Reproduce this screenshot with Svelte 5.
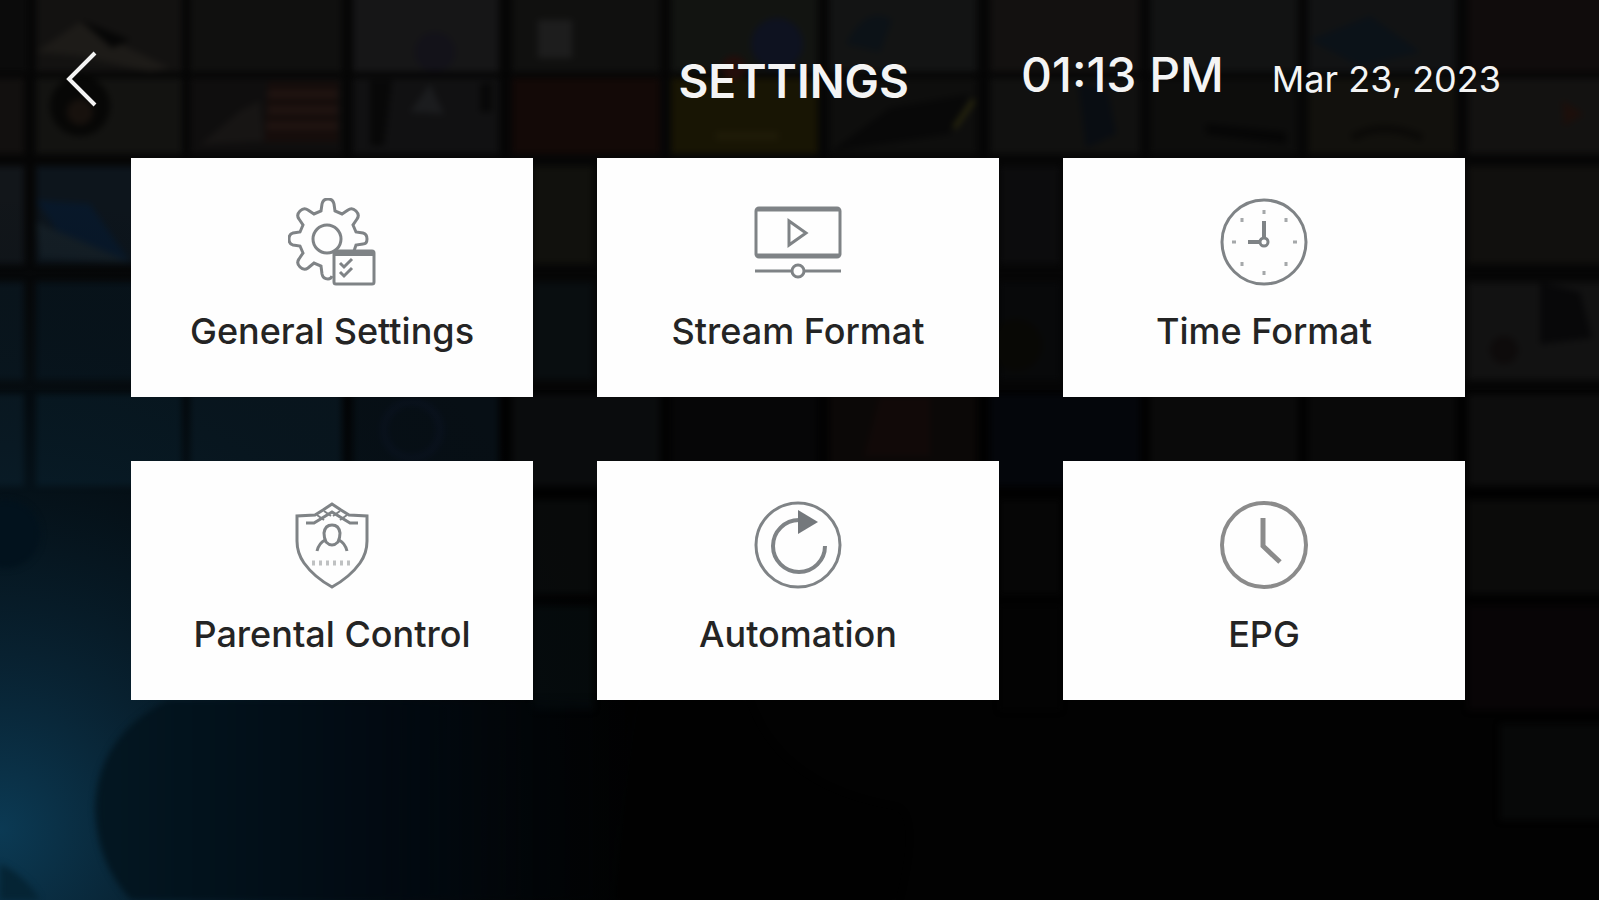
<script>
  const items = [
    { id: "general", label: "General Settings" },
    { id: "stream", label: "Stream Format" },
    { id: "time", label: "Time Format" },
    { id: "parental", label: "Parental Control" },
    { id: "automation", label: "Automation" },
    { id: "epg", label: "EPG" }
  ];

  // one list per row of screens: [x, width, color]
  const wall = [
    {
      y: -6,
      height: 78,
      screens: [
        [-10, 38, "#0b0b0b"], [36, 146, "#131211"], [190, 152, "#10100f"], [353, 146, "#161617"],
        [512, 148, "#10100f"], [671, 147, "#121411"], [829, 148, "#131414"], [990, 150, "#131110"],
        [1150, 148, "#121313"], [1308, 148, "#121314"], [1468, 140, "#100c0c"]
      ]
    },
    {
      y: 78,
      height: 76,
      screens: [
        [-10, 34, "#12100f"], [36, 146, "#131311"], [190, 152, "#0f0e0e"], [353, 146, "#111112"],
        [512, 148, "#130907"], [671, 147, "#181504"], [829, 148, "#0e0e0d"], [990, 150, "#111110"],
        [1150, 148, "#0d0d0c"], [1308, 148, "#12110d"], [1468, 140, "#131211"]
      ]
    },
    {
      y: 166,
      height: 98,
      screens: [
        [-10, 34, "#12161a"], [36, 146, "#0d151c"], [533, 60, "#11110d"], [1000, 60, "#0c0c0d"],
        [1468, 140, "#11100e"]
      ]
    },
    {
      y: 282,
      height: 98,
      screens: [
        [-10, 34, "#0a151c"], [36, 146, "#08131a"], [533, 60, "#090e10"], [1000, 60, "#08090a"],
        [1468, 140, "#121212"]
      ]
    },
    {
      y: 394,
      height: 92,
      screens: [
        [-10, 34, "#0b1820"], [36, 146, "#08171f"], [190, 152, "#09161e"], [353, 146, "#070f15"],
        [512, 148, "#0a0c0d"], [671, 147, "#060607"], [829, 148, "#0b0807"], [990, 150, "#04060b"],
        [1150, 148, "#0a0a0a"], [1308, 148, "#090909"], [1468, 140, "#0d0d0d"]
      ]
    },
    {
      y: 500,
      height: 94,
      screens: [[533, 60, "#080a0a"], [1000, 60, "#060606"], [1468, 140, "#0b0b0a"]]
    },
    {
      y: 606,
      height: 104,
      screens: [[533, 60, "#050a0b"], [1000, 60, "#030303"], [1468, 140, "#080506"]]
    },
    {
      y: 724,
      height: 96,
      screens: [[1500, 110, "#070808"]]
    }
  ];
</script>

<main class="page">
  <svg class="backdrop" viewBox="0 0 1599 900" preserveAspectRatio="xMidYMid slice" aria-hidden="true">
    <defs>
      <radialGradient id="glow" gradientUnits="userSpaceOnUse" cx="0" cy="830" r="640">
        <stop offset="0" stop-color="#0b3a54" />
        <stop offset="0.25" stop-color="#0a2b3f" stop-opacity="0.8" />
        <stop offset="0.6" stop-color="#071a26" stop-opacity="0.5" />
        <stop offset="1" stop-color="#040a10" stop-opacity="0" />
      </radialGradient>
      <linearGradient id="lens" x1="0" y1="0" x2="1" y2="0">
        <stop offset="0" stop-color="#031722" />
        <stop offset="0.5" stop-color="#020a12" />
        <stop offset="1" stop-color="#010203" stop-opacity="0" />
      </linearGradient>
      <filter id="soft" color-interpolation-filters="sRGB">
        <feGaussianBlur stdDeviation="3" />
      </filter>
    </defs>
    <rect width="1599" height="900" fill="#020202" />
    <rect width="1599" height="390" fill="#060606" />
    <g filter="url(#soft)">
      {#each wall as row}
        {#each row.screens as [x, width, color]}
          <rect {x} y={row.y} {width} height={row.height} fill={color} />
        {/each}
      {/each}
      <path d="M36 52 80 22l36 20 54 26-20 4-70-16z" fill="#1d1b18" />
      <path d="M80 20l50 20-18 8z" fill="#060606" />
      <circle cx="80" cy="106" r="30" fill="#070706" />
      <circle cx="80" cy="112" r="13" fill="#17110d" />
      <path d="M200 145l40-34 20-10 4 40z" fill="#171514" />
      <path d="M268 82h70v60h-74z" fill="#160d0b" />
      <path d="M268 94h70M268 110h70M266 126h72" stroke="#211512" stroke-width="6" />
      <path d="M370 80h22l-8 66h-14zM480 84l12-2v30h-12z" fill="#080808" />
      <path d="M410 112l20-28 14 30z" fill="#1b1c1e" />
      <path d="M538 20h34v38h-34z" fill="#1d1d1d" />
      <circle cx="435" cy="52" r="20" fill="#131219" />
      <circle cx="777" cy="44" r="26" fill="#0e1220" />
      <circle cx="734" cy="68" r="12" fill="#240d0a" />
      <path d="M716 136h62" stroke="#1f1b08" stroke-width="8" />
      <path d="M846 44q20-40 46-24l-12 32z" fill="#0c1217" />
      <path d="M830 152l60-44 80-14-20 40z" fill="#080808" />
      <path d="M954 128l20-28" stroke="#2b290d" stroke-width="4" />
      <path d="M1078 82l30 10 8 42-30 14z" fill="#090d12" />
      <path d="M1206 124l80 8v12l-80-10z" fill="#060606" />
      <path d="M1310 40l60-24 50 36-60 14z" fill="#0b1218" />
      <path d="M1352 138q30-18 70 0" stroke="#0b0a08" stroke-width="8" fill="none" />
      <path d="M1562 100l22 14-20 12z" fill="#1c0f0b" />
      <path d="M36 200l54 4 40 58-60-12z" fill="#08182a" />
      <path d="M36 222l94 40-90-4z" fill="#151f26" />
      <path d="M1540 282l40 10 12 46-52 6z" fill="#080809" />
      <circle cx="1504" cy="350" r="14" fill="#0e0b0b" />
      <path d="M880 396h50v60h-66z" fill="#110908" />
      <circle cx="412" cy="430" r="28" fill="none" stroke="#0a121f" stroke-width="6" />
      <circle cx="1016" cy="345" r="26" fill="#080805" />
    </g>
    <rect width="700" height="900" fill="url(#glow)" />
    <g filter="url(#soft)">
      <circle cx="6" cy="534" r="34" fill="#02121d" />
      <path d="M168 700Q96 736 95 810q2 54 36 90h530V700z" fill="url(#lens)" />
      <path d="M0 864q26 12 40 36H0z" fill="#052434" />
      <path d="M640 700q-12 60-24 200h280q20-80 0-90-120-20-150-110z" fill="#010101" />
    </g>
  </svg>

  <header class="header">
    <button class="back" type="button" aria-label="Back">
      <svg viewBox="0 0 32 56" aria-hidden="true">
        <path d="M29 2 3 28l26 26" />
      </svg>
    </button>
    <h1 class="title">SETTINGS</h1>
    <div class="clock">
      <time class="hour">01:13 PM</time>
      <time class="date" datetime="2023-03-23">Mar 23, 2023</time>
    </div>
  </header>

  <nav class="grid" aria-label="Settings">
    {#each items as item (item.id)}
      <button class="card" type="button">
        <svg class="icon" viewBox="0 0 88 88" aria-hidden="true">
          {#if item.id === "general"}
            <path
              d="M44 78q-1 3-4 3-5 0-6-5l-1-8-7-3-6 5q-4 3-8-1t-1-8l4-6-3-7-7-1q-4-1-4-6t4-6l7-1 3-7-4-6q-3-4 1-8t8-1l6 4 7-3 1-7q1-5 6-5t6 5l1 7 7 3 6-4q4-3 8 1t1 8l-4 6 3 7 7 1q4 1 4 6t-4 5l-7 1-2 6"
            />
            <circle cx="39" cy="41" r="14" />
            <rect x="46" y="53" width="40" height="33" rx="2" fill="#fefefe" />
            <path d="M46 56h40" stroke-width="4" />
            <path d="m52 65 4 4 8-8M52 74l4 4 8-8" />
          {:else if item.id === "stream"}
            <rect x="2" y="10" width="84" height="49" rx="3" />
            <path d="M3 12h82M3 57h82" />
            <path d="M35 23v24l17-12z" />
            <path d="M1 73h36M51 73h36" />
            <circle cx="44" cy="73" r="6" />
          {:else if item.id === "time"}
            <circle cx="44" cy="44" r="42" />
            <path d="M44 40V23M39 44H28" stroke-width="4" />
            <circle cx="44" cy="44" r="4" />
            <path
              d="M44 12v4M44 73v4M12 44h4M73 44h4M22 20v4M66 20v4M22 64v4M66 64v4"
              stroke-width="3"
              opacity="0.7"
            />
          {:else if item.id === "parental"}
            <path
              d="M44 3 35 9 27 14 9 15V40q0 12 7 22 10 14 28 24 18-10 28-24 7-10 7-22V15L61 14 53 9z"
            />
            <path d="M18 22h8l18-11 18 11h8" />
            <path d="m29 14 7 5M36 10l7 5M59 14l-7 5M52 10l-7 5" stroke-width="2" />
            <path d="M38 41q-2-4-2-9 1-8 8-8t8 8q0 5-2 9-3 3-6 3t-6-3z" />
            <path d="M37 39q-6 3-8 11M51 39q6 3 8 11" />
            <path d="M24 62h42" stroke-width="5" stroke-dasharray="3 4" opacity="0.5" />
          {:else if item.id === "automation"}
            <circle cx="44" cy="44" r="42" />
            <path d="M45 19a26 26 0 1 0 26 26" stroke-width="4" />
            <path d="M44 9v24l20-12z" fill="#74787c" stroke="none" />
          {:else}
            <circle cx="44" cy="44" r="42" stroke="#8b8b8b" stroke-width="4" />
            <path d="M43 17v28l17 16" stroke="#8b8b8b" stroke-width="5" />
          {/if}
        </svg>
        <span class="label">{item.label}</span>
      </button>
    {/each}
  </nav>
</main>

<style>
  :global(body) {
    margin: 0;
    background: #020202;
  }
  .page {
    position: relative;
    min-height: 100vh;
    overflow: hidden;
    font-family: Inter, Roboto, sans-serif;
  }
  .backdrop {
    position: absolute;
    inset: 0;
    width: 100%;
    height: 100%;
  }
  .header {
    position: relative;
    display: grid;
    grid-template-columns: 1fr auto auto;
    align-items: center;
    column-gap: 112px;
    height: 158px;
    padding: 0 98px 0 66px;
    box-sizing: border-box;
    color: #f4f4f4;
  }
  .back {
    width: 32px;
    height: 56px;
    padding: 0;
    border: 0;
    background: none;
    cursor: pointer;
  }
  .back svg {
    display: block;
    fill: none;
    stroke: #f4f4f4;
    stroke-width: 4;
  }
  .title {
    margin: 4px 0 0;
    font-size: 46px;
    line-height: 56px;
    font-weight: 600;
  }
  .clock {
    display: flex;
    align-items: baseline;
    gap: 48px;
    padding-bottom: 8px;
    white-space: nowrap;
  }
  .hour {
    font-size: 48px;
    line-height: 56px;
    font-weight: 500;
  }
  .date {
    font-size: 36px;
    font-weight: 400;
  }
  .grid {
    position: relative;
    display: grid;
    grid-template-columns: repeat(3, 1fr);
    gap: 64px;
    padding: 0 134px 64px 131px;
  }
  .card {
    display: flex;
    flex-direction: column;
    align-items: center;
    gap: 23px;
    min-height: 239px;
    padding: 40px 16px;
    border: 0;
    background: #fefefe;
    color: #242424;
    font-family: inherit;
    cursor: pointer;
  }
  .icon {
    width: 88px;
    height: 88px;
    fill: none;
    stroke: #7f8386;
    stroke-width: 3;
  }
  .label {
    font-size: 36px;
    line-height: 44px;
    font-weight: 500;
  }
</style>
